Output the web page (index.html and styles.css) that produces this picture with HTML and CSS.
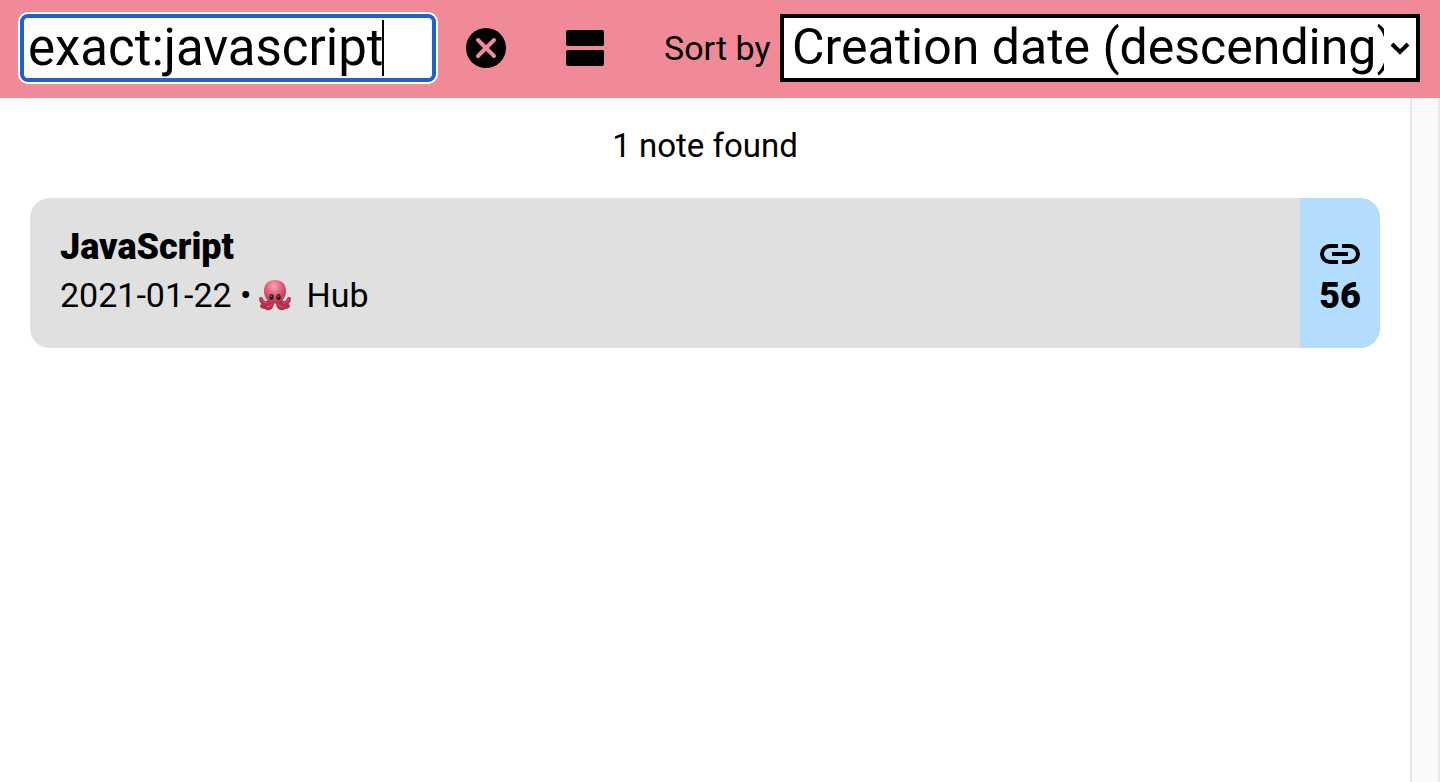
FILE: index.html
```html
<!DOCTYPE html>
<html lang="en">
<head>
<meta charset="utf-8">
<title>Notes</title>
<link rel="stylesheet" href="styles.css">
</head>
<body>
<header class="toolbar">
  <div class="search">
    <input class="search-input" type="text" value="exact:javascript" aria-label="Search notes">
    <span class="caret"></span>
  </div>
  <button class="icon-button" type="button" aria-label="Clear search">
    <svg width="40" height="40" viewBox="0 0 40 40"><circle cx="20" cy="20" r="20"/><path d="M12 12L28 28M28 12L12 28" fill="none" stroke="#f08a98" stroke-width="4" stroke-linecap="round"/></svg>
  </button>
  <button class="icon-button view-button" type="button" aria-label="Change view">
    <svg width="38" height="36" viewBox="0 0 38 36"><rect width="38" height="16" rx="2"/><rect y="20" width="38" height="16" rx="2"/></svg>
  </button>
  <label class="sort-label" for="sort">Sort by</label>
  <div class="sort">
    <select class="sort-select" id="sort"><option>Creation date (descending)</option></select>
    <svg class="chevron" width="20" height="14" viewBox="0 0 20 14"><path d="M2 2L10 10L18 2" fill="none" stroke="#000" stroke-width="4"/></svg>
  </div>
</header>
<div class="content">
  <main class="results">
    <p class="count">1 note found</p>
    <article class="note">
      <div class="note-body">
        <h2 class="note-title">JavaScript</h2>
        <div class="note-meta">
          <span>2021-01-22 •</span>
          <svg class="octopus" width="34" height="32" viewBox="0 0 34 32">
            <defs><radialGradient id="skin" cx=".45" cy=".25" r=".75"><stop offset="0" stop-color="#f6a5b2"/><stop offset=".5" stop-color="#e25c78"/><stop offset="1" stop-color="#b72747"/></radialGradient></defs>
            <g fill="none" stroke="#b82d4b" stroke-width="4" stroke-linecap="round">
              <path d="M12 21C10 26 4 25 3 20"/><path d="M22 21C24 26 30 25 31 20"/>
              <path d="M12 23C10 28 7 29 4 27"/><path d="M22 23C24 28 27 29 30 27"/>
              <path d="M14 24C14 28 12 30 9 29"/><path d="M20 24C20 28 22 30 25 29"/>
            </g>
            <path d="M17 1C9 1 6 6 6 12C6 17 8 19 10 22L12 26Q17 23 22 26L24 22C26 19 28 17 28 12C28 6 25 1 17 1Z" fill="url(#skin)"/>
            <g fill="none" stroke="#e25c78" stroke-linecap="round"><path d="M3 20Q5 24 9 24M31 20Q29 24 25 24M9 28Q12 28 14 25M25 28Q22 28 20 25"/></g>
            <ellipse cx="13.5" cy="18" rx="2.2" ry="2.9" fill="#292020"/><ellipse cx="20.5" cy="18" rx="2.2" ry="2.9" fill="#292020"/>
            <circle cx="13.2" cy="17" r=".6" fill="#fff"/><circle cx="20.2" cy="17" r=".6" fill="#fff"/>
          </svg>
          <span class="tag">Hub</span>
        </div>
      </div>
      <div class="note-links">
        <svg width="40" height="20" viewBox="0 0 40 20"><g fill="none" stroke="#000" stroke-width="4"><path d="M18 2H10A8 8 0 0 0 10 18H18M22 2H30A8 8 0 0 1 30 18H22M12 10H28"/></g></svg>
        <span>56</span>
      </div>
    </article>
  </main>
  <div class="scroll-track"></div>
</div>
</body>
</html>
```
FILE: styles.css
```css
* { box-sizing: border-box; }
body {
  margin: 0;
  min-height: 100vh;
  display: flex;
  flex-direction: column;
  background: #fff;
  color: #000;
  font-family: Roboto, "Liberation Sans", sans-serif;
  font-size: 34px;
}
.toolbar {
  display: flex;
  align-items: center;
  padding: 14px 20px 16px;
  background: #f08a98;
}
.search { position: relative; flex: 416 1 0; min-width: 0; }
.search-input {
  display: block;
  width: 100%;
  height: 68px;
  padding: 0 4px 2px;
  border: 4px solid #2161c8;
  border-radius: 8px;
  outline: 0;
  box-shadow: 0 0 0 2px #fff;
  background: #fff;
  color: #000;
  font: 51px Roboto, "Liberation Sans", sans-serif;
}
.caret {
  position: absolute;
  left: 362px;
  top: 6px;
  width: 2px;
  height: 56px;
  background: #000;
}
.icon-button {
  display: flex;
  padding: 0;
  border: 0;
  margin-left: 30px;
  background: none;
}
.view-button { margin: 0 60px; }
.sort-label { width: 106px; margin-right: 10px; white-space: nowrap; }
.sort { position: relative; flex: 640 1 0; min-width: 0; }
.sort-select {
  appearance: none;
  display: block;
  width: 100%;
  height: 68px;
  padding: 0 32px 2px 8px;
  border: 4px solid #000;
  border-radius: 0;
  background: #fff;
  color: #000;
  font: 50px Roboto, "Liberation Sans", sans-serif;
}
.chevron { position: absolute; right: 10px; top: 28px; pointer-events: none; }
.content { flex: 1; display: flex; }
.results { flex: 1; padding: 28px 30px; min-width: 0; }
.count { margin: 0 0 32px; font-size: 33px; line-height: 40px; text-align: center; }
.note { display: flex; border-radius: 20px; overflow: hidden; background: #e0e0e0; }
.note-body { flex: 1; padding: 25px 30px 29px; }
.note-title { margin: 0; font-size: 36px; line-height: 48px; font-weight: 900; }
.note-meta { display: flex; align-items: center; line-height: 48px; }
.octopus { margin-left: 6px; }
.tag { margin-left: 15px; }
.note-links {
  width: 80px;
  display: flex;
  flex-direction: column;
  align-items: center;
  justify-content: center;
  gap: 12px;
  padding-top: 14px;
  background: #b2ddff;
  font-size: 36px;
  font-weight: 900;
  line-height: 40px;
}
.scroll-track {
  width: 30px;
  background: #fafafa;
  border: solid #e8e8e8;
  border-width: 0 2px;
}
```
